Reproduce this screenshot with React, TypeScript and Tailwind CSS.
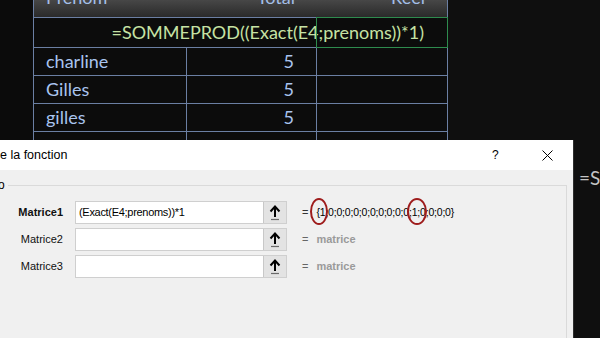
import React from 'react';

const rows = [
  { name: 'charline', total: '5' },
  { name: 'Gilles', total: '5' },
  { name: 'gilles', total: '5' },
];

const args = [
  { label: 'Matrice1', bold: true, value: '(Exact(E4;prenoms))*1', result: '{1;0;0;0;0;0;0;0;0;0;0;1;0;0;0;0}' },
  { label: 'Matrice2', bold: false, value: '', result: 'matrice' },
  { label: 'Matrice3', bold: false, value: '', result: 'matrice' },
];

const RefButton = () => (
  <div className="w-[23px] h-full bg-[#e3e3e3] border-l border-[#c8c8c8] flex items-center justify-center">
    <svg width="14" height="17" viewBox="0 0 14 17">
      <path d="M7 13V3" stroke="#000" strokeWidth="2" fill="none" />
      <path d="M2.5 7.5L7 2.5l4.5 5" stroke="#000" strokeWidth="2" fill="none" />
      <path d="M3 15.5h8" stroke="#6a6a6a" strokeWidth="1.2" />
    </svg>
  </div>
);

const App = () => {
  return (
    <div className="w-[600px] h-[338px] overflow-hidden bg-[#0f0f0f] flex flex-col">
      {/* feuille Excel derrière */}
      <div className="h-[140px] flex shrink-0 overflow-hidden font-['Lato',sans-serif]">
        <div className="w-[33px] bg-[#0b0b0b]" />
        <div className="w-[415px] flex flex-col border-l border-r border-[#6b7fa3] bg-[#0c0c0c]">
          <div className="h-[18px] shrink-0 flex border-b border-[#6b7fa3] bg-gradient-to-b from-[#474747] to-[#2a2a2a] text-[#a4bfe8] text-[18px] leading-[18px] overflow-hidden">
            <div className="w-[153px] pl-[12px] -mt-[12px]">Prenom</div>
            <div className="w-[130px] pr-[22px] text-right -mt-[12px]">Total</div>
            <div className="w-[130px] pr-[22px] text-right -mt-[12px]">Reel</div>
          </div>
          <div className="h-[30px] shrink-0 relative flex items-center justify-end pr-[23px] border-b border-[#6b7fa3] text-[#c6e2a4] text-[18px]">
            <span>=SOMMEPROD((Exact(E4;prenoms))*1)</span>
            <div className="absolute z-10 right-[-1px] top-[-1px] w-[132px] h-[31px] border border-[#2e8b4e]" />
          </div>
          {rows.map((r) => (
            <div key={r.name} className="h-[28px] shrink-0 flex border-b border-[#6b7fa3] text-[#a9c4ef] text-[18px]">
              <div className="w-[153px] pl-[12px] border-r border-[#6b7fa3] flex items-center">{r.name}</div>
              <div className="w-[130px] pr-[22px] border-r border-[#6b7fa3] flex items-center justify-end">{r.total}</div>
              <div className="w-[130px]" />
            </div>
          ))}
          <div className="flex-1 flex">
            <div className="w-[153px] border-r border-[#6b7fa3]" />
            <div className="w-[130px] border-r border-[#6b7fa3]" />
          </div>
        </div>
        <div className="flex-1 bg-[#0f0f0f]" />
      </div>

      <div className="flex-1 flex">
        {/* boîte de dialogue */}
        <div className="w-[574px] flex flex-col border-r border-[#2e2e2e] font-['Liberation_Sans',sans-serif]">
          <div className="h-[30px] shrink-0 bg-white flex items-center text-[12.5px] text-black">
            <span className="flex-1">e la fonction</span>
            <span className="w-[50px] text-[12px]">?</span>
            <svg width="11" height="11" viewBox="0 0 11 11" className="mr-[20px]">
              <path d="M0.5 0.5l10 10M10.5 0.5l-10 10" stroke="#000" strokeWidth="1" />
            </svg>
          </div>
          <div className="flex-1 bg-[#f0f0f0] flex flex-col">
            <div className="mt-[15px] mr-[6px] flex-1 border-t border-r border-[#dadada] relative">
              <span className="absolute left-[-2px] top-[-9px] bg-[#f0f0f0] pr-[3px] text-[12px] leading-[16px] text-black">o</span>
              <div className="pt-[15px] flex flex-col gap-[4px]">
                {args.map((a) => (
                  <div key={a.label} className="h-[23px] flex items-center">
                    <div className={`w-[63px] text-right text-[11px] text-[#111] ${a.bold ? 'font-bold' : ''}`}>
                      {a.label}
                    </div>
                    <div className="ml-[12px] w-[212px] h-[23px] bg-white border border-[#cfcfcf] flex">
                      <div className="flex-1 pl-[3px] text-[11px] tracking-[-0.3px] leading-[21px] text-black">{a.value}</div>
                      <RefButton />
                    </div>
                    <span className={`ml-[15px] text-[11px] ${a.bold ? 'text-[#333]' : 'text-[#666]'}`}>=</span>
                    {a.bold ? (
                      <div className="relative ml-[8px] text-[10.5px] tracking-[-0.2px] text-black">
                        {a.result}
                        <div className="absolute left-[-6px] top-[-7px] w-[18px] h-[27px] rounded-[50%] border-2 border-[#9e1c1c]" />
                        <div className="absolute left-[91px] top-[-7px] w-[20px] h-[27px] rounded-[50%] border-2 border-[#9e1c1c]" />
                      </div>
                    ) : (
                      <span className="ml-[8px] text-[11px] font-semibold text-[#9a9a9a]">{a.result}</span>
                    )}
                  </div>
                ))}
              </div>
            </div>
          </div>
        </div>
        {/* barre de formule derrière */}
        <div className="flex-1 bg-[#0f0f0f] pl-[5px] pt-[27px] text-[19px] leading-[22px] text-[#c4c4c4] font-['Lato',sans-serif] overflow-hidden whitespace-nowrap">
          =S
        </div>
      </div>
    </div>
  );
};

export default App;
